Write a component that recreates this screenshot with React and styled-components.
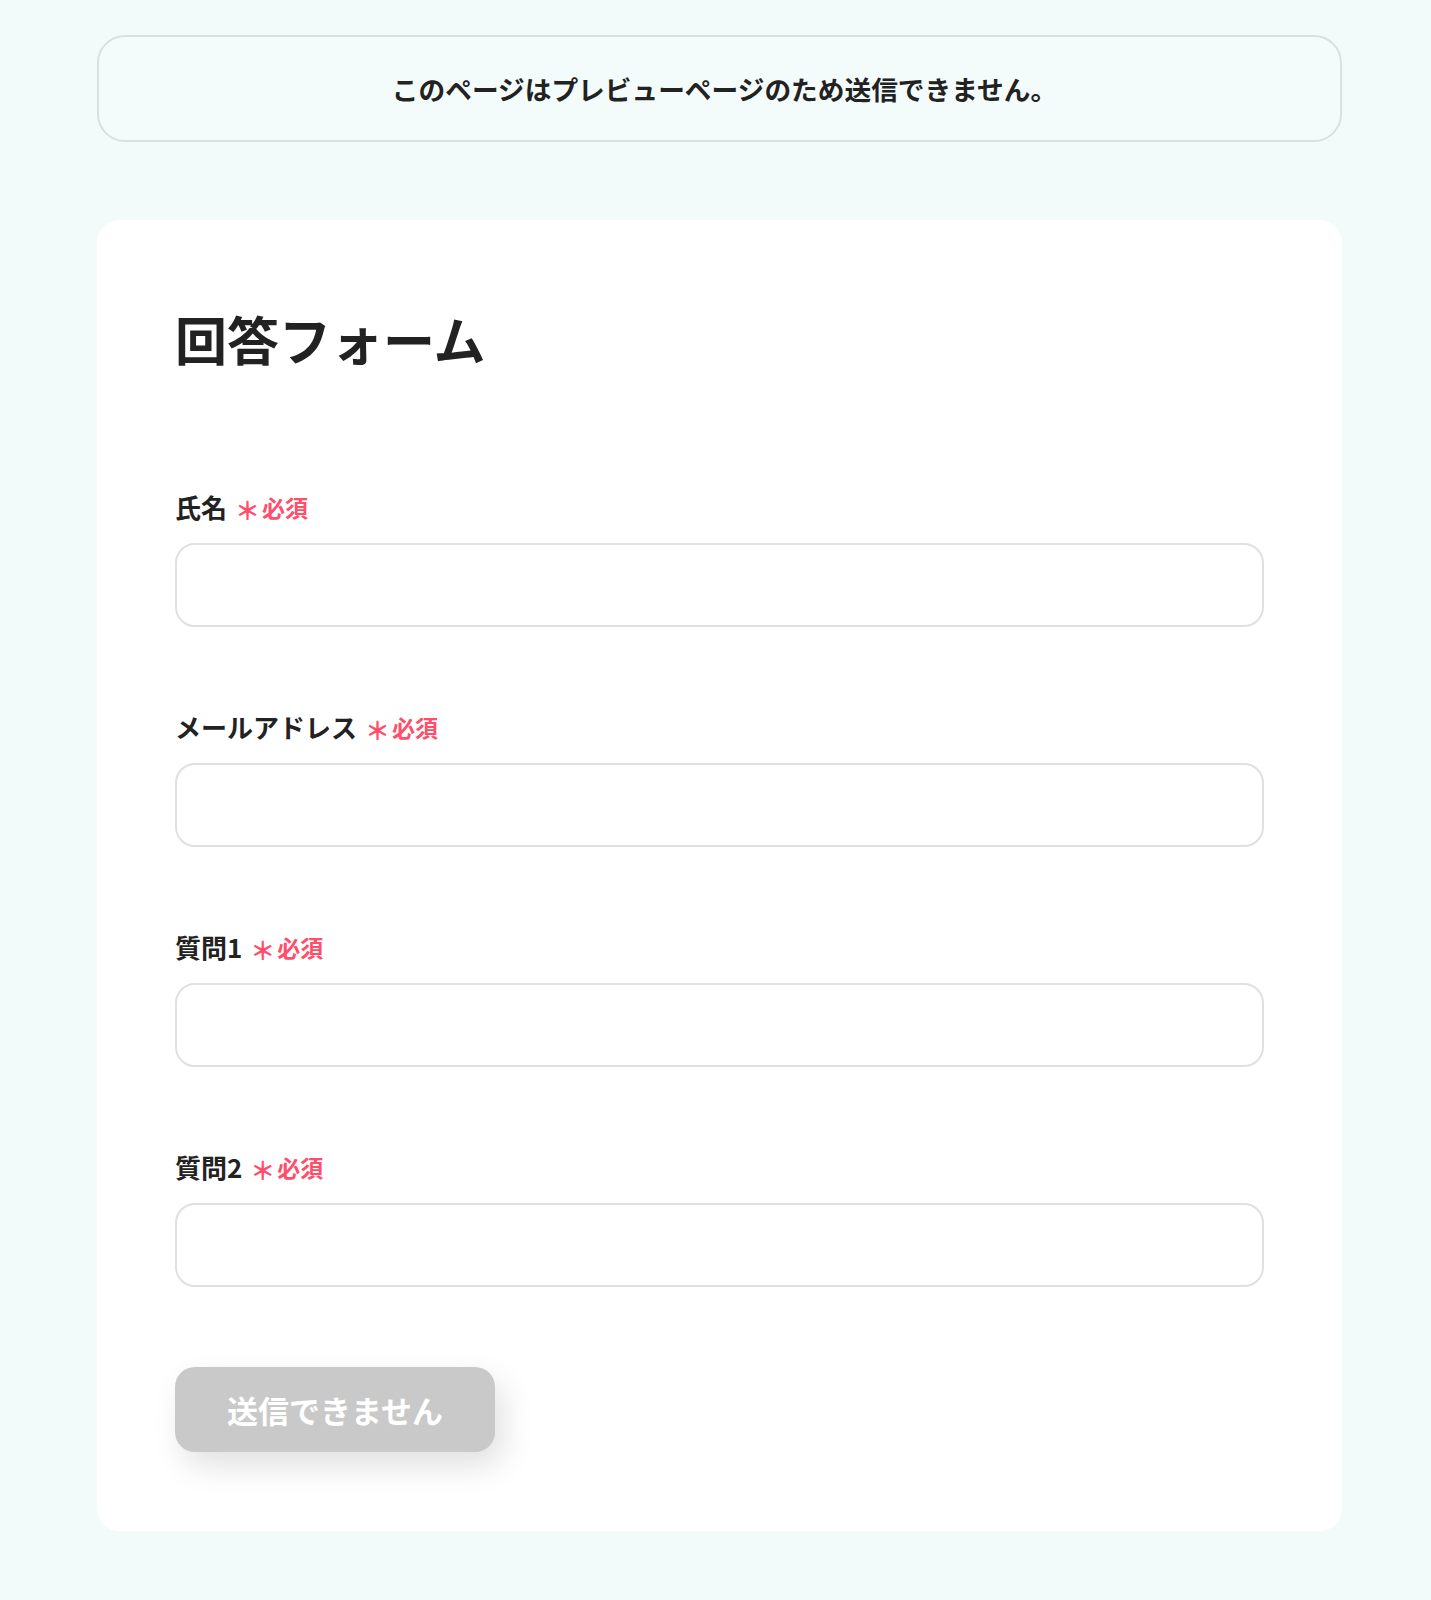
import React from "react";
import styled, { createGlobalStyle } from "styled-components";

const GlobalStyle = createGlobalStyle`
  html, body { margin: 0; padding: 0; background: #f2fafa; }
  body {
    font-family: "Noto Sans CJK JP", "Noto Sans", sans-serif;
    color: #222;
  }
`;

const Page = styled.div`
  min-height: 1600px;
  box-sizing: border-box;
  padding: 35px 89px 72px 97px;
  background: #f2fafa;
`;

const Banner = styled.div`
  height: 107px;
  box-sizing: border-box;
  border: 2px solid #dcdfdf;
  border-radius: 28px;
  background: #f4fbfb;
  display: flex;
  align-items: center;
  justify-content: center;
  padding-left: 10px;
  font-size: 26.7px;
  font-weight: 700;
  color: #222;
`;

const Card = styled.form`
  margin-top: 78px;
  background: #fff;
  border-radius: 22px;
  padding: 80px 78px 79px;
  display: flex;
  flex-direction: column;
`;

const Title = styled.h1`
  margin: 0 0 110px;
  font-size: 52px;
  line-height: 78px;
  font-weight: 700;
  color: #222;
`;

const Fields = styled.div`
  display: flex;
  flex-direction: column;
  gap: 81px;
`;

const Field = styled.div`
  display: flex;
  flex-direction: column;
  gap: 17px;
`;

const Label = styled.label`
  display: flex;
  align-items: center;
  font-size: 26px;
  line-height: 38px;
  font-weight: 700;
  color: #222;
`;

const Required = styled.span`
  margin-left: 8px;
  color: #ff4d6a;
  font-size: 23px;
  font-weight: 700;
  display: inline-flex;
  align-items: center;
`;

const Star = styled.span`
  font-size: 25px;
  font-weight: 700;
  margin-right: 2px;
  position: relative;
  top: 2px;
`;

const Input = styled.input`
  height: 84px;
  box-sizing: border-box;
  border: 2px solid #e0e0e0;
  border-radius: 20px;
  background: #fff;
  padding: 0 22px;
  font-size: 22px;
  font-family: inherit;
  outline: none;
`;

const Button = styled.button`
  margin-top: 80px;
  align-self: flex-start;
  width: 320px;
  height: 85px;
  border: none;
  border-radius: 20px;
  background: #c9c9c9;
  color: #fff;
  font-family: inherit;
  font-size: 31px;
  font-weight: 700;
  box-shadow: 8px 14px 32px rgba(0, 0, 0, 0.12);
  cursor: not-allowed;
`;

const fields = ["氏名", "メールアドレス", "質問1", "質問2"];

export default function App() {
  return (
    <>
      <GlobalStyle />
      <Page>
        <Banner>このページはプレビューページのため送信できません。</Banner>
        <Card onSubmit={(e) => e.preventDefault()}>
          <Title>回答フォーム</Title>
          <Fields>
            {fields.map((f) => (
              <Field key={f}>
                <Label>
                  {f}
                  <Required>
                    <Star>＊</Star>必須
                  </Required>
                </Label>
                <Input type="text" />
              </Field>
            ))}
          </Fields>
          <Button type="button" disabled>
            送信できません
          </Button>
        </Card>
      </Page>
    </>
  );
}
